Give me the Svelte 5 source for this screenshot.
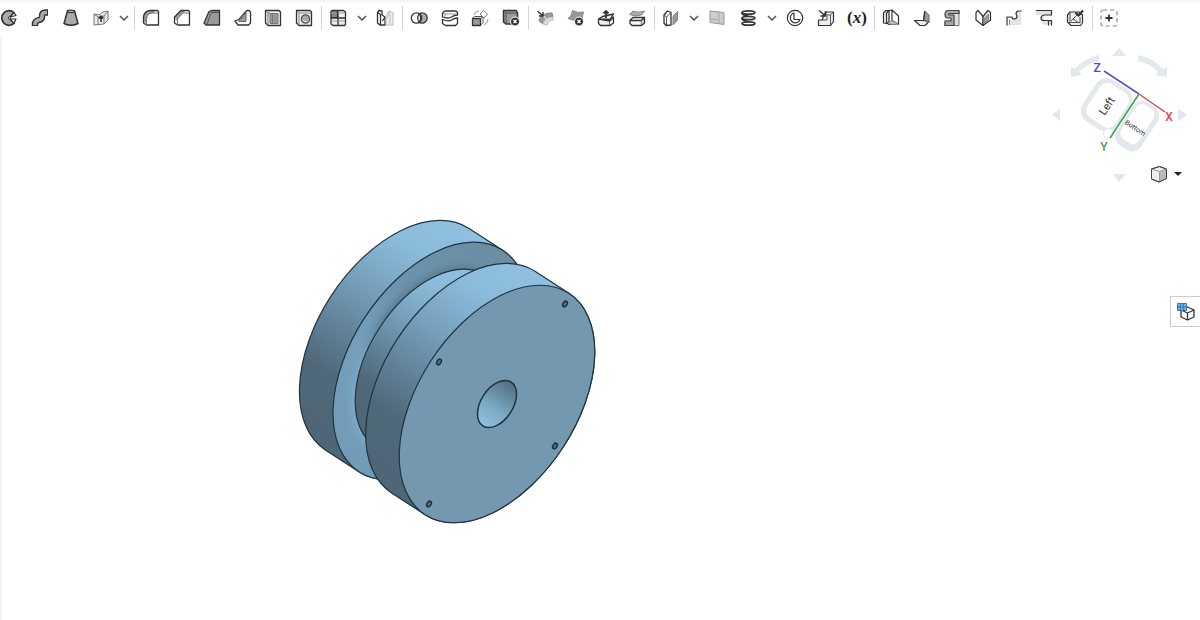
<script lang="ts">
	type Tool = { name: string; icon?: string; caret?: boolean };

	const icons: Record<string, string> = {
		revolve:
			'<path d="M14 3.6A7.3 7.3 0 1 0 14 14.4L10 9.800V8.200Z" fill="#aaa" stroke-width="1.7"/><path d="M10 8 14 3.600 16 6.500ZM10 10h6l-2 4.400Z" fill="#fff" stroke-width="1.2"/><circle cx="9.500" cy="9" r="1.2" fill="#fff" stroke-width="1"/>',
		sweep:
			'<path d="M4 17v-2C4 9 11 13 11 8s2-4.500 6-4.500" stroke-width="6.500"/><path d="M4 16v-1C4 9 11 13 11 8s2-4.500 5-4.500" stroke="#aaa" stroke-width="3.500"/>',
		loft: '<path d="M5.500 2 2 14.500q7 3.500 14 0L12.500 2Z" fill="#aaa" stroke-width="1.500"/><ellipse cx="9" cy="2.300" rx="3.500" ry="1.200" fill="#eee"/>',
		thicken:
			'<path d="m2 5 5 1 4-3 5-1v9l-4 4-10 1Z" fill="#eee" stroke="#777" stroke-width="1"/><path d="m2 5 4 3 6-1 4-5M12 7v8M6 8v8" stroke="#777" stroke-width="1"/><path d="M9 13V8M7 9.500 9 7l2 2.500" stroke-width="1.600"/>',
		fillet:
			'<path d="M1.500 12V8Q2 2.200 8 1.500h5L12 4Q5 4 4.500 11v4Z" fill="#999" stroke="none"/><path d="M1.500 14V8Q2 2.200 8 1.500h7.500l1 1V16H4.500Z"/><path d="M4.500 16v-6Q5 4 10 4h6" stroke="#777" stroke-width="1"/>',
		chamfer:
			'<path d="m1.500 8 6-6.500h5L5 9v5Z" fill="#999" stroke="none"/><path d="M1.500 14V8L8 1.500h7.500l1 1V16H4.500Z"/><path d="M4.500 16v-6L10 4h6" stroke="#777" stroke-width="1"/>',
		draft:
			'<path d="M1 14 6 2.500 8.500 1.500h8V16H3Z" fill="#999"/><path d="m4 15.500 4-12h8" stroke="#555" stroke-width="1"/>',
		rib: '<path d="m1 12 4-1.500 6-7 2-2h2l1.500 1.500V14l-2 2H4Z" fill="#fff"/><path d="M4.500 11.500Q10 9 12 3.500v9H5Z" fill="#999" stroke="#666" stroke-width="1"/>',
		shell:
			'<path d="M1.500 14V1.500H15l1.500 1.500v13.500H4Z" fill="#eee"/><path d="M6 4.500h8v10H6Z" fill="#999" stroke="#777" stroke-width="1"/><path d="m2 2 2 2v12M4 4h2M8.500 5v9" stroke="#777" stroke-width="1"/>',
		hole: '<path d="M1.500 14V1.500H15l1.500 1.500v13.500H4Z" fill="#eee"/><path d="m2 2 2 2v12M4 4h12" stroke="#888" stroke-width="1"/><circle cx="10.500" cy="10" r="4.200" fill="#aaa" stroke="#555" stroke-width="1.200"/><path d="M7.500 11q2 3 5 1.500Q10 12 7.500 11Z" fill="#fff" stroke="none"/>',
		pattern:
			'<path d="M2 3q0-1.500 1.500-1.500h5V9H2Z" fill="#888"/><path d="M9 1.500h5.500L16.500 3v6H9ZM2 9h7v7.500H4L2 15ZM9 9h7.500v6.500l-1 1H9Z" fill="#eee"/><path d="M2 4h6M9 4h7M2 12h6M9 12h7" stroke="#999" stroke-width="1"/>',
		mirror:
			'<path d="m1.500 3.500 1.500-2 3 .5v4l3 2v8H4l-2.500-2Z" fill="#fff"/><path d="m1.500 3.500 3 2V16M9 8 6.500 12"/><path d="M10 16V7l3-5 4 2v12Z" fill="#eee" stroke="#bbb" stroke-width="1"/><path d="M13 2v4l-3 4M14 6v9" stroke="#bbb" stroke-width="1"/>',
		boolean:
			'<circle cx="12" cy="9" r="5.200" fill="#aaa"/><circle cx="6.500" cy="9" r="5.200" fill="#fff"/><path d="M9.200 4.600q3 4.400 0 8.800q-3-4.400 0-8.800Z" fill="#eee" stroke-width="1.200"/>',
		split:
			'<path d="M1.500 8V4l2.500-2h11l1.500 1.500V6q-3 0-6 2t-9 0Z" fill="#fff"/><path d="M1.500 10.500q6 2.500 9 .5t6-2v5.500l-2 2h-10l-3-2Z" fill="#fff"/><path d="m2 4 2 1h12M4 5v3" stroke="#999" stroke-width="1"/>',
		transform:
			'<path d="M1.500 9.500h8v7h-8Z" fill="#999"/><path d="m1.500 9.500 2-2H12l-2.500 2M12 7.500v6l-2.500 3" stroke="#555" stroke-width="1"/><path d="m9 5 3.500-3.500L16.500 5 13 9Z" fill="#fff" stroke="#777" stroke-width="1"/><path d="M3 6q1-4 5-4M13 16q3.500-1 4-6" stroke="#999" stroke-width="1"/>',
		deletePart:
			'<path d="M1.500 13V1.500H14L15.500 4v11H4Z" fill="#999" stroke-width="1.500"/><path d="m2 2 2 2v11M4 4h11" stroke="#555" stroke-width="1"/><circle cx="13" cy="12.500" r="4.500" fill="#333" stroke="#fff" stroke-width="1"/><path d="m11.500 11 3 3m0-3-3 3" stroke="#fff"/>',
		modifyFillet:
			'<path d="m5 8q5-5 11-4l1 4q-7-1-10 7l-4-3q0-2 2-4Z" fill="#999" stroke="#888" stroke-width="1"/><path d="M7 15q2-7 10-7v3q-5 0-6 5Z" fill="#ddd" stroke="#bbb" stroke-width="1"/><path d="m1.500 2 5 4.500M3 7h4V3" stroke-width="1.400"/><path d="m8 7 2 3" stroke="#fff" stroke-width="1"/>',
		deleteFace:
			'<path d="M1 9.500Q5 7 5.500 1.500q5 3 11 1.500l-2 8q-6 2-13.500-1.500Z" fill="#999" stroke="#888" stroke-width="1"/><circle cx="12" cy="12.500" r="4.500" fill="#333" stroke="#fff" stroke-width="1"/><path d="m10.500 11 3 3m0-3-3 3" stroke="#fff"/>',
		moveFace:
			'<path d="m1.500 10 4-2.500 11-2.500L13 10.500ZM1.500 10l11.500 2v4.500H3.500l-2-2Z" fill="#eee"/><path d="m13 12 3.500-4v6L13 16.500" fill="#fff"/><path d="M9 9V2M6.500 4.500 9 2l2.500 2.500" stroke-width="1.800"/>',
		replaceFace:
			'<path d="M1.500 5.500 5 2q5 2.500 11.500 0l-3 4Q7 8 1.500 5.500Z" fill="#aaa" stroke="#888" stroke-width="1"/><path d="m2 11.500 3-3h11.500l-3 3ZM2 11.500h11.500v5H4l-2-2Z" fill="#fff"/><path d="m13.500 11.500 3-3v5.500l-3 2.500" fill="#ddd"/>',
		offset:
			'<path d="M2 14V6l3.500-4L9 3.500V16l-5 .5Z" fill="#fff"/><path d="m2 6 2.500 2v8M4.500 8 9 3.500" stroke="#555" stroke-width="1"/><path d="M11 7l4.500-4.500V11L11 16Z" fill="#999" stroke="#888" stroke-width="1"/>',
		plane:
			'<path d="m2 2 14 1.500v12L2 13.500Z" fill="#ccc" stroke="#999" stroke-width="1"/><path d="m2 10 9 1V3m0 8v4" stroke="#aaa" stroke-width="1"/>',
		helix:
			'<g stroke-width="1.700"><ellipse cx="9.500" cy="3.500" rx="6.500" ry="1.700"/><ellipse cx="9.500" cy="9" rx="6.500" ry="1.700"/><ellipse cx="9.500" cy="14.500" rx="6.500" ry="1.700"/><path d="M3 3.500q0 3 6 3.500M3 9q0 3 6 3.500"/></g>',
		gauge:
			'<circle cx="9" cy="9" r="7.700" stroke-width="1.200"/><path d="M8 4a5 5 0 1 0 6 6.500H8Z" fill="#fff" stroke-width="1.200"/>',
		derived:
			'<path d="M1.500 11h4l1-5 3-3h7v9.500l-3 4h-12Z" fill="#eee" stroke-width="1.200"/><path d="M6.500 6h7v10.500M13.500 6l3-3M6 11h4v-4" stroke="#555" stroke-width="1"/><path d="m2 1.500 6 5M8.500 2v5h-5" stroke-width="1.500"/>',
		variable: '',
		sheetMetal:
			'<path d="M1.500 14V4L4 1.500h3V12l-2 2.500Z" fill="#eee" stroke-width="1.200"/><path d="m7 1.500 3-.5v10.500l6.500 4H7l-2.500-1.500M10 1l6.500 6v8.500M4.500 14V4L7 1.500" stroke-width="1.200"/><path d="m6 14 4-2.500 6.500 4H9Z" fill="#bbb" stroke="#888" stroke-width="1"/>',
		flange:
			'<path d="M1.500 11.500H10l6 1-4 4H7Z" fill="#eee" stroke-width="1.200"/><path d="m10.500 11 1-9 4.500 4v6.500Z" fill="#999" stroke="#666" stroke-width="1"/><path d="M1.500 11.500h9L12 2" stroke-width="1.200"/>',
		hem: '<path d="M9 1.500h7v15H2v-4l7-1Z" fill="#ddd" stroke="#777" stroke-width="1"/><path d="M16 1.500H4.500Q2 2 2 5.500T4.500 9H8v3H2v4.500h9V6H6V4.500h10Z" fill="#aaa" stroke="#444" stroke-width="1.200"/>',
		tab: '<path d="m2 3.500 2-2 5 6v9L2 11Z" fill="#fff" stroke-width="1.200"/><path d="m9 7.500 5-6 2.500 2V11L9 16.500Z" fill="#eee" stroke-width="1.200"/><path d="m10.500 9 4-4v6l-4 3.500Z" fill="#999" stroke="#888" stroke-width="1"/>',
		bend: '<path d="M5 10h11v6H5ZM11 3h5v7h-5Z" fill="#e4e4e4" stroke="none"/><path d="M16.500 2H14q-3 0-3 3l1 2q0 3-3 3-2 0-2-2H2v8.500" stroke-width="1.200"/><path d="M4.500 16V11" stroke="#888" stroke-width="1"/>',
		joint:
			'<path d="M1 1.500h15v5H9v5h7v4H7V6H1Z" fill="#e0e0e0" stroke="none"/><path d="M1 1.500h15.500V6H9Q6 6.500 6 9t3 2.500h7.500v5M13.500 16.500v-5" stroke-width="1.200"/>',
		finish:
			'<path d="M1.500 6 4 3h9l3.500 3v8l-2 2.500H5L1.500 13Z" fill="#eee" stroke-width="1.200"/><path d="M4 3v10.500h10M4 13.500l-2 0M14 8v6M5 12l6-6M7 10l6 4" stroke="#555" stroke-width="1"/><path d="m9.500 3.500 3 3L17 1.500" stroke-width="2.200"/>',
		add: '<rect x="1" y="1" width="16" height="16" rx="2" stroke="#888" stroke-width="1.200" stroke-dasharray="4 3"/><path d="M9 5.500v7M5.500 9h7" stroke-width="1.800"/>'
	};

	const caret: Tool = { name: 'More tools', caret: true };
	const tool = (name: string, icon: string): Tool => ({ name, icon });

	const groups: { width: number; tools: Tool[] }[] = [
		{
			width: 125,
			tools: [
				tool('Revolve', 'revolve'),
				tool('Sweep', 'sweep'),
				tool('Loft', 'loft'),
				tool('Thicken', 'thicken'),
				caret
			]
		},
		{
			width: 171,
			tools: [
				tool('Fillet', 'fillet'),
				tool('Chamfer', 'chamfer'),
				tool('Draft', 'draft'),
				tool('Rib', 'rib'),
				tool('Shell', 'shell'),
				tool('Hole', 'hole')
			]
		},
		{ width: 65, tools: [tool('Linear pattern', 'pattern'), caret, tool('Mirror', 'mirror')] },
		{
			width: 110,
			tools: [
				tool('Boolean', 'boolean'),
				tool('Split', 'split'),
				tool('Transform', 'transform'),
				tool('Delete part', 'deletePart')
			]
		},
		{
			width: 110,
			tools: [
				tool('Modify fillet', 'modifyFillet'),
				tool('Delete face', 'deleteFace'),
				tool('Move face', 'moveFace'),
				tool('Replace face', 'replaceFace')
			]
		},
		{
			width: 204,
			tools: [
				tool('Offset surface', 'offset'),
				caret,
				tool('Plane', 'plane'),
				tool('Helix', 'helix'),
				caret,
				tool('Mass properties', 'gauge'),
				tool('Derived', 'derived'),
				tool('Variable', 'variable')
			]
		},
		{
			width: 202,
			tools: [
				tool('Sheet metal model', 'sheetMetal'),
				tool('Flange', 'flange'),
				tool('Hem', 'hem'),
				tool('Tab', 'tab'),
				tool('Bend', 'bend'),
				tool('Make joint', 'joint'),
				tool('Finish sheet metal', 'finish')
			]
		},
		{ width: 18, tools: [tool('Add custom features', 'add')] }
	];

	const screwHoles = [
		[265, 88],
		[139, 146],
		[255, 230],
		[129, 288]
	];
</script>

<div class="studio">
	<header class="toolbar">
		{#each groups as group}
			<div class="group">
				<div class="tools" style="width: {group.width}px">
					{#each group.tools as item}
						{#if item.caret}
							<button class="caret" aria-label={item.name}>
								<svg width="10" height="6" viewBox="0 0 10 6">
									<path d="m1 1 4 4 4-4" fill="none" stroke="#555" stroke-width="1.5" />
								</svg>
							</button>
						{:else if item.icon === 'variable'}
							<button class="tool variable" aria-label={item.name}>(<i>x</i>)</button>
						{:else}
							<button class="tool" aria-label={item.name}>
								<svg
									width="18"
									height="18"
									viewBox="0 0 18 18"
									fill="none"
									stroke="#333"
									stroke-width="1.3"
									stroke-linejoin="round"
								>
									{@html icons[item.icon ?? '']}
								</svg>
							</button>
						{/if}
					{/each}
				</div>
			</div>
		{/each}
	</header>

	<main class="viewport">
		<svg class="model" width="300" height="310" viewBox="0 0 300 310" role="img" aria-label="Spool">
			<defs>
				<linearGradient id="rim">
					<stop offset="0" stop-color="#4e6676" />
					<stop offset="0.25" stop-color="#506979" />
					<stop offset="0.42" stop-color="#628299" />
					<stop offset="0.62" stop-color="#77a2be" />
					<stop offset="0.82" stop-color="#8bbbda" />
					<stop offset="1" stop-color="#8fc0e0" />
				</linearGradient>
				<linearGradient id="groove">
					<stop offset="0" stop-color="#729bb6" />
					<stop offset="0.4" stop-color="#749eba" />
					<stop offset="0.7" stop-color="#6b93ad" />
					<stop offset="1" stop-color="#6b8da4" />
				</linearGradient>
				<linearGradient id="shade">
					<stop offset="0" stop-color="#84b2d0" />
					<stop offset="0.3" stop-color="#7eabc8" />
					<stop offset="0.55" stop-color="#54758a" />
					<stop offset="1" stop-color="#5b7b90" />
				</linearGradient>
				<linearGradient id="bore">
					<stop offset="0" stop-color="#8ec0df" />
					<stop offset="0.4" stop-color="#7ca9c5" />
					<stop offset="1" stop-color="#536d7e" />
				</linearGradient>
				<filter id="soft" x="-20%" y="-20%" width="140%" height="140%">
					<feGaussianBlur stdDeviation="4" />
				</filter>
				<clipPath id="groove-face">
					<ellipse cy="-79" rx="132" ry="79" />
				</clipPath>
			</defs>
			<g transform="translate(197 188) rotate(-57)" stroke="#20333f" stroke-width="1.2">
				<path d="M-132-79V-119A132 79 0 0 1 132-119V-79A132 79 0 0 1-132-79Z" fill="url(#rim)" />
				<ellipse cy="-79" rx="132" ry="79" fill="url(#groove)" />
				<g clip-path="url(#groove-face)" stroke="none">
					<ellipse cy="-79" rx="105" ry="64" fill="url(#shade)" filter="url(#soft)" />
				</g>
				<path d="M-102-40V-79A102 61 0 0 1 102-79V-40Z" fill="url(#rim)" />
				<path d="M-132 0V-40A132 79 0 0 1 132-40V0A132 79 0 0 1-132 0Z" fill="url(#rim)" />
				<ellipse rx="132" ry="79" fill="#7398af" />
				<ellipse rx="26" ry="16" fill="url(#bore)" stroke-width="1.5" />
			</g>
			{#each screwHoles as [x, y]}
				<ellipse
					rx="3"
					ry="2"
					transform="translate({x} {y}) rotate(-57)"
					fill="#55707f"
					stroke="#1c303c"
					stroke-width="1.5"
				/>
			{/each}
		</svg>

		<div class="navigator">
			<svg width="140" height="140" viewBox="0 0 140 140" role="img" aria-label="View cube">
				<g fill="#e3e8ed">
					<path d="m69 3 7 8H62ZM2 69.500l8-6v13ZM137 69.500l-9-6v13ZM69 137l-6-8h13Z" />
					<path
						d="M49 10v6q-13 3-20 11l3 3-11 2V22l4 2q9-11 24-14ZM88 10v6q13 3 20 11l-2 3 11 2V22l-4 2q-10-11-25-14Z"
					/>
				</g>
				<g transform="translate(89 49) rotate(33)" fill="#fff" stroke="#e3e8ed">
					<rect x="2" y="3" width="28" height="50" rx="10" fill="#e3e8ed" />
					<rect x="4" y="5" width="22" height="42" rx="8" />
					<rect x="-41" y="3" width="40" height="48" rx="12" fill="#e3e8ed" />
					<rect x="-37" y="6" width="34" height="41" rx="9" />
					<circle cx="-4" cy="50" r="5" />
				</g>
				<g fill="none" stroke-width="1.5">
					<path d="M89 49 54 26" stroke="#5550cc" />
					<path d="m89 49 26 18" stroke="#d8484c" />
					<path d="M89 49 60 93" stroke="#3da44c" />
				</g>
				<g class="axis">
					<text x="47" y="27" fill="#4a45cc">Z</text>
					<text x="119" y="76" fill="#e0484c">X</text>
					<text x="54" y="106" fill="#3da44c">Y</text>
				</g>
				<g class="face">
					<text transform="translate(60 63) rotate(-57)" font-size="11">Left</text>
					<text transform="translate(84 85) rotate(33)" font-size="7">Bottom</text>
				</g>
			</svg>
			<button class="view" aria-label="View options">
				<svg width="18" height="18" viewBox="0 0 18 18" stroke="#444" stroke-linejoin="round">
					<path d="m1.500 4 8-2.500 7 2.500v9.500L9 17l-7.500-3Z" fill="#eee" />
					<path d="m9.500 6.500 7-2.500v9.500L9.500 17Z" fill="#bbb" stroke="none" />
					<path d="m1.500 4 8 2.500 7-2.500M9.500 6.500V17" fill="none" stroke="#999" />
					<path d="m1.500 4 8-2.500 7 2.500v9.500L9 17l-7.500-3Z" fill="none" />
				</svg>
				<svg width="8" height="4" viewBox="0 0 8 4"><path d="M0 0h8L4 4Z" fill="#222" /></svg>
			</button>
		</div>

		<button class="panel" aria-label="Configuration panel">
			<svg width="20" height="20" viewBox="0 0 20 20" stroke-linejoin="round">
				<path d="m5 8 6.500-3L18 8v7l-6.500 3L5 15Z" fill="#fff" stroke="#333" stroke-width="1.3" />
				<path d="m5 8 6.500 3L18 8M11.500 11v7" fill="none" stroke="#333" stroke-width="1.3" />
				<path d="M1.500 1.500h9v7h-9Z" fill="#69b1e6" stroke="#2f78b4" />
				<path d="M4.500 1.500v7M7.500 1.500v7M1.500 5h9" stroke="#2f78b4" />
			</svg>
		</button>
	</main>
</div>

<style>
	:global(body) {
		margin: 0;
		background: #fff;
	}

	.studio {
		display: flex;
		flex-direction: column;
		min-height: 100vh;
		font-family: Roboto, 'Liberation Sans', sans-serif;
	}

	button {
		display: flex;
		align-items: center;
		justify-content: center;
		flex-shrink: 0;
		padding: 0;
		border: 0;
		background: none;
		color: #222;
		cursor: pointer;
	}

	svg {
		display: block;
	}

	.toolbar {
		display: flex;
		align-items: center;
		height: 36px;
		background: linear-gradient(#f1f1f1, #fff 3px);
	}

	.group {
		flex-shrink: 0;
		padding: 3px 8px 3px 7px;
		border-left: 1px solid #d4d4d4;
	}

	.group:first-child {
		padding-right: 9px;
		padding-left: 0;
		border-left: 0;
	}

	.tools {
		display: flex;
		align-items: center;
		justify-content: space-between;
	}

	.tool {
		width: 18px;
		height: 18px;
	}

	.caret {
		width: 10px;
		height: 18px;
		margin: 0 -4px;
	}

	.variable {
		font: bold 17px 'Liberation Serif', serif;
	}

	.viewport {
		position: relative;
		flex: 1;
		min-height: 500px;
		overflow: hidden;
		background: linear-gradient(90deg, #efefef, #fff 3px);
	}

	.model {
		position: absolute;
		top: 180px;
		left: 25%;
		overflow: visible;
	}

	.navigator {
		position: absolute;
		top: 9px;
		right: 10px;
	}

	.axis {
		font-size: 12px;
		font-weight: 500;
		text-anchor: middle;
	}

	.face {
		fill: #333;
		text-anchor: middle;
	}

	.view {
		position: absolute;
		top: 120px;
		right: 8px;
		gap: 6px;
	}

	.panel {
		position: absolute;
		top: 260px;
		right: 0;
		width: 30px;
		height: 31px;
		border: 1px solid #ccc;
		border-right: 0;
		background: #fff;
	}
</style>
